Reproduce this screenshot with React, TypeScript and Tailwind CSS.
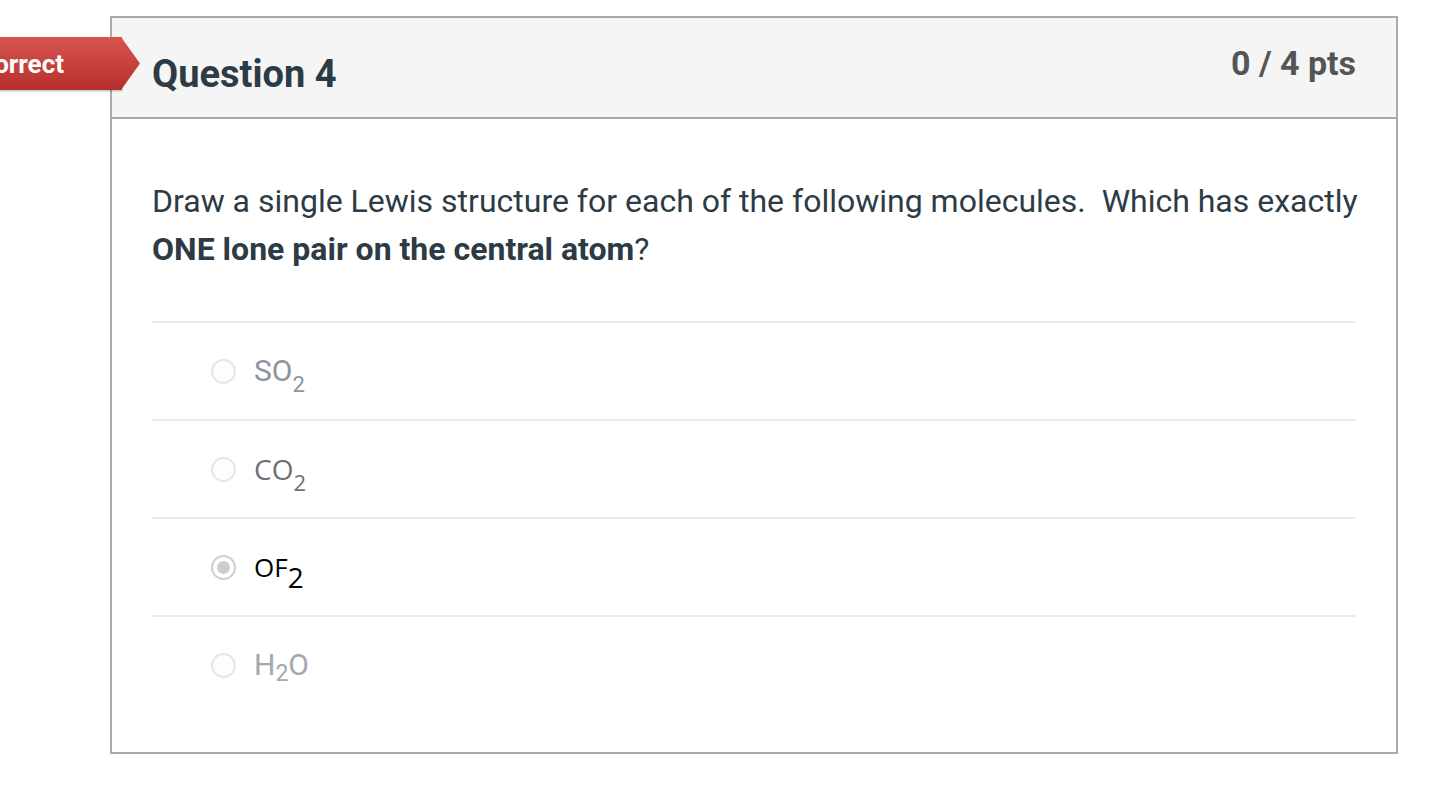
import React from 'react';

type Answer = {
  key: string;
  base: React.ReactNode;
  selected?: boolean;
  className: string;
};

const answers: Answer[] = [
  {
    key: 'so2',
    base: (
      <>
        SO<sub className="text-[22px] -bottom-[11px]">2</sub>
      </>
    ),
    className: "font-['Roboto',sans-serif] text-[30px] text-[#8b959e]",
  },
  {
    key: 'co2',
    base: (
      <>
        CO<sub className="text-[22px] -bottom-[11px]">2</sub>
      </>
    ),
    className: "font-['Open_Sans',sans-serif] text-[28px] text-[#6e7073]",
  },
  {
    key: 'of2',
    base: (
      <>
        OF<sub className="text-[28px] -bottom-[11px]">2</sub>
      </>
    ),
    selected: true,
    className: "font-['Open_Sans',sans-serif] text-[26px] text-black",
  },
  {
    key: 'h2o',
    base: (
      <>
        H<sub className="text-[23px] -bottom-[6px]">2</sub>O
      </>
    ),
    className: "font-['Roboto',sans-serif] text-[30px] text-[#a2a8ac]",
  },
];

const Radio: React.FC<{ selected?: boolean }> = ({ selected }) => (
  <span
    className={`flex h-[25px] w-[25px] shrink-0 items-center justify-center rounded-full border-2 ${
      selected ? 'border-[#cfcfcf] bg-white' : 'border-[#e6e6e6] bg-[#fdfdfd]'
    }`}
  >
    {selected && <span className="h-[13px] w-[13px] rounded-full bg-[#cccccc]" />}
  </span>
);

export default function App() {
  return (
    <div className="relative min-h-[786px] w-[1432px] bg-white pt-[16px] font-['Roboto',sans-serif]">
      <div className="ml-[110px] w-[1288px] border-2 border-[#aaaaaa]">
        <div className="flex h-[101px] items-start justify-between border-b-2 border-[#aaaaaa] bg-[#f5f5f5] px-[40px]">
          <h2 className="pt-[32px] text-[38px] leading-[48px] font-bold text-[#2d3b45]">Question 4</h2>
          <div className="pt-[23px] text-[34px] leading-[44px] font-bold text-[#555555]">0 / 4 pts</div>
        </div>

        <div className="px-[40px] pt-[58px] pb-[39px]">
          <p className="text-[32px] leading-[48px] text-[#2d3b45]">
            <span className="whitespace-nowrap">
              Draw a single Lewis structure for each of the following molecules.{'\u00a0 '}Which has exactly
            </span>
            <br />
            <strong className="font-bold">ONE lone pair on the central atom</strong>?
          </p>

          <div className="mt-[48px]">
            {answers.map((a) => (
              <div
                key={a.key}
                className="flex h-[98px] items-center gap-[18px] border-t-2 border-[#ebebeb] pl-[59px]"
              >
                <Radio selected={a.selected} />
                <span className={`${a.className} leading-none`}>{a.base}</span>
              </div>
            ))}
          </div>
        </div>
      </div>

      {/* result banner */}
      <div className="absolute top-[37px] left-0 flex h-[53px] items-center">
        <div className="flex h-full w-[122px] items-center justify-end overflow-hidden bg-gradient-to-b from-[#d9534f] to-[#b5302c] pr-[58px] shadow-[0_1px_2px_rgba(0,0,0,0.3)]">
          <span className="text-[26px] leading-none font-bold whitespace-nowrap text-white">Incorrect</span>
        </div>
        <svg width="19" height="53" viewBox="0 0 19 53" className="-ml-px">
          <defs>
            <linearGradient id="bn" x1="0" y1="0" x2="0" y2="1">
              <stop offset="0" stopColor="#d9534f" />
              <stop offset="1" stopColor="#b5302c" />
            </linearGradient>
          </defs>
          <polygon points="0,0 0,53 19,26.5" fill="url(#bn)" />
        </svg>
      </div>
    </div>
  );
}
